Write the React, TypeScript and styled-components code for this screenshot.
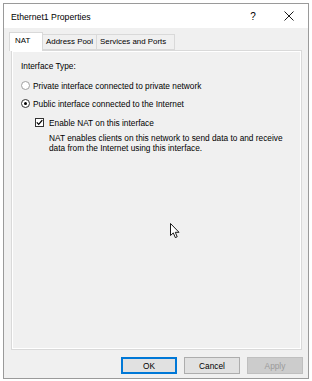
import {FC} from "react"
import styled, {createGlobalStyle} from "styled-components"

const GlobalStyle = createGlobalStyle`
    html, body {
        margin: 0;
        padding: 0;
        background: #ffffff;
    }

    body {
        font-family: "Liberation Sans", Arial, sans-serif;
        font-size: 8.3px;
        color: #000;
    }
`

const tabs = ["NAT", "Address Pool", "Services and Ports"]
const tabWidths = [34, 54, 78]

const App: FC = () => {
    return <Page>
        <GlobalStyle/>
        <Window>
            <TitleBar>
                <Title>Ethernet1 Properties</Title>
                <HelpButton>?</HelpButton>
                <CloseButton>
                    <svg width="10" height="10" viewBox="0 0 10 10">
                        <path d="M0.5 0.5 L9.5 9.5 M9.5 0.5 L0.5 9.5" stroke="#000" strokeWidth="0.9" fill="none"/>
                    </svg>
                </CloseButton>
            </TitleBar>

            <Content>
                <TabRow>
                    {tabs.map((t, i) =>
                        <Tab key={t} selected={i === 0} style={{width: tabWidths[i]}}>{t}</Tab>
                    )}
                </TabRow>

                <Panel>
                    <Label>Interface Type:</Label>

                    <OptionRow first>
                        <Radio/>
                        <span>Private interface connected to private network</span>
                    </OptionRow>
                    <OptionRow>
                        <Radio checked/>
                        <span>Public interface connected to the Internet</span>
                    </OptionRow>

                    <SubGroup>
                        <OptionRow>
                            <Checkbox>
                                <svg width="7" height="7" viewBox="0 0 7 7">
                                    <path d="M0.8 3.4 L2.7 5.4 L6.3 1.2" stroke="#000" strokeWidth="1.3" fill="none"/>
                                </svg>
                            </Checkbox>
                            <span>Enable NAT on this interface</span>
                        </OptionRow>
                        <Description>
                            NAT enables clients on this network to send data to and receive<br/>
                            data from the Internet using this interface.
                        </Description>
                    </SubGroup>
                </Panel>

                <ButtonRow>
                    <Button primary>OK</Button>
                    <Button>Cancel</Button>
                    <Button disabled>Apply</Button>
                </ButtonRow>
            </Content>

            <Cursor>
                <svg width="11" height="16" viewBox="0 0 11 16">
                    <path d="M0.5 0.5 L0.5 12.5 L3.3 9.9 L5.3 14.6 L7.2 13.8 L5.3 9.3 L9 9.3 Z"
                          fill="#fff" stroke="#000" strokeWidth="0.9" strokeLinejoin="miter"/>
                </svg>
            </Cursor>
        </Window>
    </Page>
}

const Page = styled.div`
    padding: 3px 0 0 3px;
    height: 381px;
    box-sizing: border-box;
    overflow: hidden;
`

const Window = styled.div`
    position: relative;
    width: 306px;
    height: 376px;
    box-sizing: border-box;
    border: 1px solid #9a9a9a;
    background: #f0f0f0;
    display: flex;
    flex-direction: column;
`

const TitleBar = styled.div`
    height: 24px;
    background: #ffffff;
    display: flex;
    align-items: center;
    padding-left: 7px;
`

const Title = styled.div`
    flex: 1;
    font-size: 8.7px;
    padding-top: 1px;
`

const HelpButton = styled.div`
    width: 12px;
    margin-right: 25px;
    text-align: center;
    font-size: 10px;
`

const CloseButton = styled.div`
    width: 10px;
    height: 10px;
    margin-right: 14px;
    display: flex;
`

const Content = styled.div`
    flex: 1;
    display: flex;
    flex-direction: column;
    padding: 4px 6px 4px 7px;
    min-height: 0;
`

const TabRow = styled.div`
    display: flex;
    align-items: flex-end;
    height: 18px;
    margin-left: -2px;
    position: relative;
    z-index: 1;
`

const Tab = styled.div<{ selected?: boolean }>`
    box-sizing: border-box;
    height: ${p => p.selected ? 19 : 16}px;
    margin-bottom: ${p => p.selected ? -1 : 0}px;
    border: 1px solid #d9d9d9;
    border-bottom: ${p => p.selected ? "none" : "1px solid #d9d9d9"};
    border-left: ${p => p.selected ? "1px solid #d9d9d9" : "none"};
    background: ${p => p.selected ? "#ffffff" : "#f0f0f0"};
    padding-left: ${p => p.selected ? 5 : 3}px;
    padding-top: ${p => p.selected ? 3 : 2}px;
    font-size: 7.9px;
    white-space: nowrap;
    overflow: hidden;
`

const Panel = styled.div`
    flex: 1;
    border: 1px solid #d9d9d9;
    box-shadow: inset 0 0 0 1px #ffffff;
    padding: 10px 9px;
    display: flex;
    flex-direction: column;
`

const Label = styled.div`
    line-height: 11px;
`

const OptionRow = styled.div<{ first?: boolean }>`
    display: flex;
    align-items: center;
    height: 11px;
    margin-top: ${p => p.first ? 8 : 7}px;
    gap: 3px;
`

const Radio = styled.div<{ checked?: boolean }>`
    width: 9px;
    height: 9px;
    box-sizing: border-box;
    border-radius: 50%;
    border: 1px solid ${p => p.checked ? "#333" : "#a0a0a0"};
    background: #fff;
    display: flex;
    align-items: center;
    justify-content: center;

    &::after {
        content: "";
        width: 3px;
        height: 3px;
        border-radius: 50%;
        background: ${p => p.checked ? "#000" : "transparent"};
    }
`

const SubGroup = styled.div`
    margin-top: 1px;
    padding-left: 14px;

    & > ${OptionRow} {
        gap: 5px;
    }
`

const Checkbox = styled.div`
    width: 9px;
    height: 9px;
    box-sizing: border-box;
    border: 1px solid #333;
    background: #fff;
    display: flex;
    align-items: center;
    justify-content: center;
`

const Description = styled.div`
    margin-top: 5px;
    padding-left: 14px;
    line-height: 10px;
`

const ButtonRow = styled.div`
    display: flex;
    justify-content: flex-end;
    gap: 7px;
    margin-top: 7px;
    margin-right: -1px;
`

const Button = styled.div<{ primary?: boolean, disabled?: boolean }>`
    width: 56px;
    height: 17px;
    box-sizing: border-box;
    display: flex;
    align-items: center;
    justify-content: center;
    background: ${p => p.disabled ? "#cccccc" : "#e1e1e1"};
    border: 1px solid ${p => p.primary ? "#0078d7" : p.disabled ? "#bfbfbf" : "#adadad"};
    box-shadow: ${p => p.primary ? "inset 0 0 0 1px #0078d7" : "none"};
    color: ${p => p.disabled ? "#9a9a9a" : "#000"};
`

const Cursor = styled.div`
    position: absolute;
    left: 166px;
    top: 219px;
    width: 11px;
    height: 16px;
    pointer-events: none;
`

export default App
